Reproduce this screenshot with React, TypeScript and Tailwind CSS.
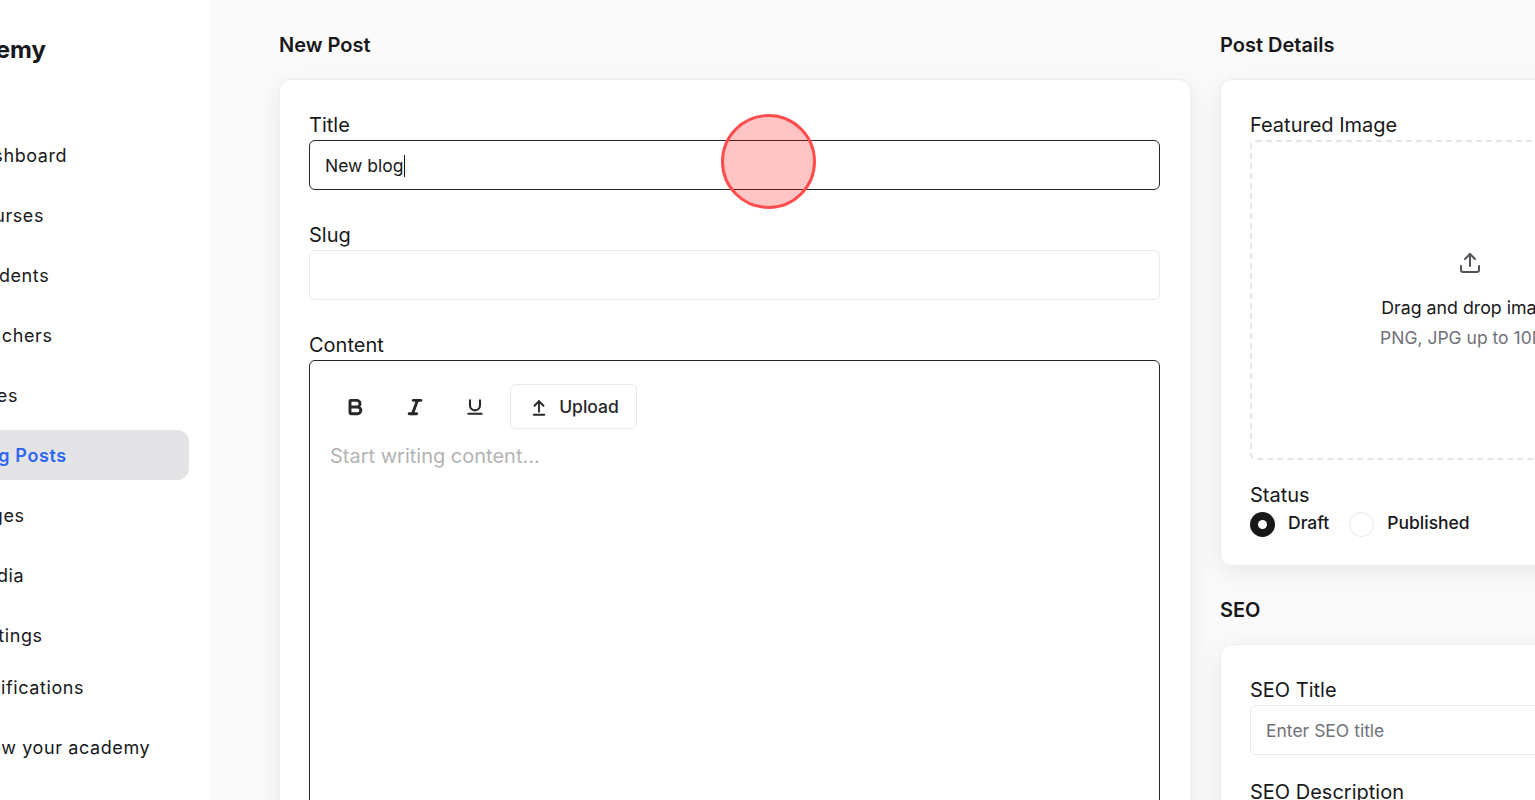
import { ArrowUpFromLine, Bold, Italic, Underline, Upload } from "lucide-react";

const navTop = ["Dashboard", "Courses", "Students", "Teachers", "Sales", "Blog Posts", "Pages", "Media", "Settings"];
const navBottom = ["Notifications", "Grow your academy"];

function NavItem({ label }: { label: string }) {
  const active = label === "Blog Posts";
  return (
    <div
      className={
        active
          ? "flex h-[50px] items-center rounded-r-xl bg-[#e4e4e7] pl-[44px] text-[18px] font-semibold tracking-[0.6px] text-[#2f66f6]"
          : "flex h-[50px] items-center pl-[44px] text-[18px] tracking-[0.6px] text-[#18181b]"
      }
    >
      {label}
    </div>
  );
}

function Label({ children }: { children: string }) {
  return <div className="h-[30px] text-[20px] leading-[30px] text-[#18181b]">{children}</div>;
}

function Card({ children }: { children: React.ReactNode }) {
  return (
    <div className="rounded-xl border border-[#eeeeee] bg-white pb-[27px] pl-[29px] pr-[30px] pt-[30px] shadow-[0_6px_24px_rgba(0,0,0,0.08)]">
      {children}
    </div>
  );
}

function ToolButton({ children }: { children: React.ReactNode }) {
  return <div className="flex h-[45px] w-[45px] items-center justify-center text-[#27272a]">{children}</div>;
}

export default function App() {
  return (
    <div className="relative flex h-[800px] w-[1535px] overflow-hidden bg-[#fafafa] font-['Inter',sans-serif]">
      <aside className="h-full w-[210px] shrink-0 overflow-hidden bg-white">
        <div className="ml-[-75px] w-[264px]">
          <div className="flex h-[130px] items-start pl-[10px] pt-[32px] text-[24px] font-bold leading-9 text-[#18181b]">Academy</div>
          <nav className="flex flex-col gap-[10px]">
            {navTop.map((n) => (
              <NavItem key={n} label={n} />
            ))}
          </nav>
          <div className="mt-[2px] flex flex-col gap-[10px]">
            {navBottom.map((n) => (
              <NavItem key={n} label={n} />
            ))}
          </div>
        </div>
      </aside>

      <main className="flex shrink-0 gap-[29px] pl-[69px] pt-[30px]">
        <section className="w-[912px] shrink-0">
          <h2 className="mb-[19px] h-[30px] text-[20px] font-semibold leading-[30px] text-[#18181b]">New Post</h2>
          <div className="h-[900px] rounded-xl border border-[#eeeeee] bg-white pl-[29px] pr-[30px] pt-[30px] shadow-[0_6px_24px_rgba(0,0,0,0.08)]">
            <Label>Title</Label>
            <div className="flex h-[50px] items-center rounded-md border border-[#27272a] px-[15px] pt-[2px] text-[17.5px] text-[#18181b]">
              New blog<span className="h-[22px] w-px bg-[#18181b]" />
            </div>
            <div className="mt-[30px]">
              <Label>Slug</Label>
              <div className="h-[50px] rounded-md border border-[#e8e8e8]" />
            </div>
            <div className="mt-[30px]">
              <Label>Content</Label>
              <div className="h-[600px] rounded-md border border-[#27272a] px-[20px] pt-[23px]">
                <div className="flex items-center gap-[15px] pl-[2px]">
                  <ToolButton><Bold size={20} strokeWidth={3.5} /></ToolButton>
                  <ToolButton><Italic size={20} strokeWidth={3.5} /></ToolButton>
                  <ToolButton><Underline size={20} strokeWidth={2.5} /></ToolButton>
                  <div className="-ml-[2px] flex h-[45px] w-[127px] items-center justify-center gap-[11px] rounded-md border border-[#e8e8e8] pl-[2px] pt-[2px] text-[17.5px] font-medium text-[#27272a]">
                    <ArrowUpFromLine size={18} strokeWidth={2.5} />
                    Upload
                  </div>
                </div>
                <div className="mt-[12px] text-[20px] leading-[30px] text-[#b3b3b3]">Start writing content...</div>
              </div>
            </div>
          </div>
        </section>

        <section className="w-[500px] shrink-0">
          <h2 className="mb-[19px] h-[30px] text-[20px] font-semibold leading-[30px] text-[#18181b]">Post Details</h2>
          <Card>
            <Label>Featured Image</Label>
            <div className="flex h-[320px] flex-col items-center justify-center rounded-md border-2 border-dashed border-[#e5e5e5] pt-[4px]">
              <Upload size={24} strokeWidth={2} className="text-[#52525b]" />
              <div className="mt-[18px] text-[17.75px] leading-[30px] text-[#18181b]">Drag and drop image</div>
              <div className="text-[17.5px] leading-[30px] text-[#71717a]">PNG, JPG up to 10MB</div>
            </div>
            <div className="mt-[20px]">
              <Label>Status</Label>
              <div className="flex items-center text-[17.5px] font-medium text-[#18181b]">
                <span className="flex h-[25px] w-[25px] items-center justify-center rounded-full bg-[#18181b]">
                  <span className="h-[9px] w-[9px] rounded-full bg-white" />
                </span>
                <span className="mb-[2px] ml-[13px]">Draft</span>
                <span className="ml-[20px] h-[25px] w-[25px] rounded-full border border-[#e8e8e8]" />
                <span className="mb-[2px] ml-[13px]">Published</span>
              </div>
            </div>
          </Card>
          <h2 className="mb-[19px] mt-[29px] h-[30px] text-[20px] font-semibold leading-[30px] text-[#18181b]">SEO</h2>
          <Card>
            <Label>SEO Title</Label>
            <div className="flex h-[50px] items-center rounded-md border border-[#e8e8e8] px-[15px] pt-[2px] text-[17.5px] text-[#71717a]">Enter SEO title</div>
            <div className="mt-[22px]">
              <Label>SEO Description</Label>
            </div>
          </Card>
        </section>
      </main>

      <div className="absolute left-[720.5px] top-[113.5px] h-[95px] w-[95px] rounded-full border-[3.5px] border-[#ff4d4d] bg-[#ff0000]/[0.23]" />
    </div>
  );
}
